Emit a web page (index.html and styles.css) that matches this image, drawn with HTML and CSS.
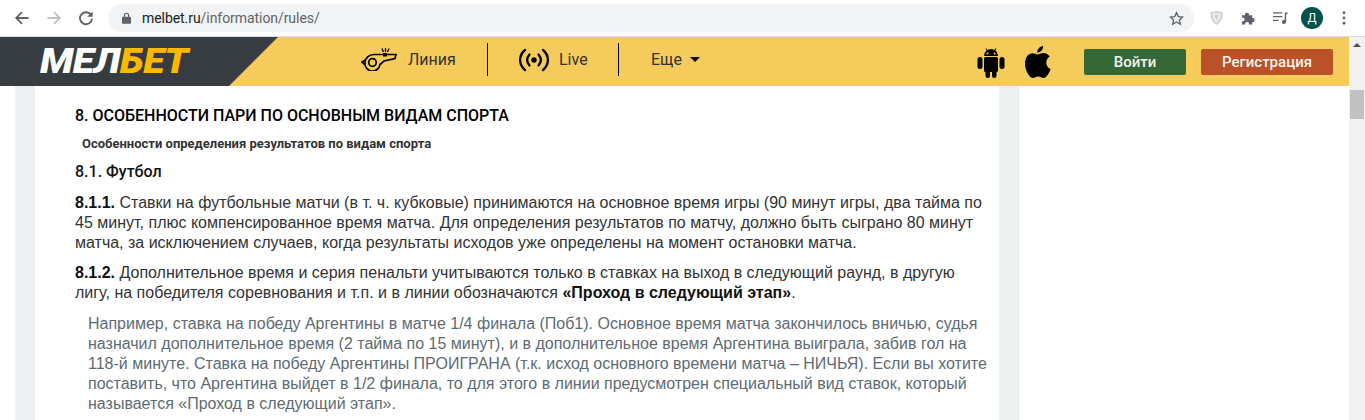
FILE: index.html
```html
<!DOCTYPE html>
<html lang="ru">
<head>
  <meta charset="UTF-8">
  <title>Правила</title>
  <link rel="stylesheet" href="styles.css">
</head>
<body>

  <!-- Browser toolbar -->
  <div class="toolbar">
    <svg class="tool-icon" viewBox="0 0 16 16"><path d="M14.5 8H2.6M8 2.2 2.2 8 8 13.8" fill="none" stroke="#5f6368" stroke-width="1.8"/></svg>
    <svg class="tool-icon" viewBox="0 0 16 16"><path d="M1.5 8h11.9M8 2.2 13.8 8 8 13.8" fill="none" stroke="#bdc1c6" stroke-width="1.8"/></svg>
    <svg class="tool-icon" viewBox="0 0 16 16"><path d="M13.2 5.2A6 6 0 1 0 14 8.6" fill="none" stroke="#5f6368" stroke-width="1.9"/><path d="M14.6 1.4v5.4H9.2z" fill="#5f6368"/></svg>
    <div class="omnibox">
      <svg class="lock" viewBox="0 0 10 13"><path d="M2 5V3.6a3 3 0 0 1 6 0V5h1a1 1 0 0 1 1 1v6a1 1 0 0 1-1 1H1a1 1 0 0 1-1-1V6a1 1 0 0 1 1-1zm1.3 0h3.4V3.6a1.7 1.7 0 0 0-3.4 0z" fill="#5f6368"/></svg>
      <span class="url"><b>melbet.ru</b>/information/rules/</span>
      <svg class="star" viewBox="0 0 16 16"><path d="m8 1.6 1.9 4.3 4.6.5-3.4 3.1 1 4.6L8 11.7l-4.1 2.4 1-4.6-3.4-3.1 4.6-.5z" fill="none" stroke="#5f6368" stroke-width="1.4"/></svg>
    </div>
    <div class="extensions">
      <svg class="ext" viewBox="0 0 16 18"><path d="M1 2.500 8 1l7 1.500c0 6-1.500 11-7 14.500C2.500 13.500 1 8.500 1 2.500z" fill="#cfd1d3"/><path d="M3.500 4h9c0 4.500-1.200 7.500-4.500 10-3.300-2.500-4.500-5.500-4.500-10z" fill="#f1f2f2"/><path d="M6 5h4c0 3-.5 5-2 6.500C6.500 10 6 8 6 5z" fill="#cfd1d3"/></svg>
      <svg class="ext" viewBox="0 0 16 16"><path d="M1 5h3.300a2.100 2.100 0 1 1 4.100 0H12v3.200a2.100 2.100 0 1 1 0 4.100V15H8.500a2.100 2.100 0 1 0-4 0H1v-3.500a2.100 2.100 0 1 0 0-4z" fill="#5f6368"/></svg>
      <svg class="ext" viewBox="0 0 16 14"><path d="M0 1.500h10M0 5.500h10M0 9.500h6" stroke="#5f6368" stroke-width="1.400"/><path d="M12.500 1h3v2h-1.500v8a2.200 2.200 0 1 1-1.500-2z" fill="#5f6368"/></svg>
      <span class="avatar">Д</span>
      <svg class="dots" viewBox="0 0 4 16"><circle cx="2" cy="2" r="1.600"/><circle cx="2" cy="8" r="1.600"/><circle cx="2" cy="14" r="1.600"/></svg>
    </div>
  </div>

  <div class="viewport">
    <div class="page">

      <!-- Site header -->
      <header class="site-header">
        <a class="logo"><span class="logo-text">МЕЛ<em>БЕТ</em></span></a>
        <nav class="menu">
          <a class="menu-item item-line">
            <svg class="whistle" viewBox="0 0 36 23"><g fill="none" stroke="#000" stroke-width="1.700"><path d="M35 6.500H13C8 6.500 4 10 4 14.500a7.500 7.500 0 0 0 15 2L23 13l11-2.500z"/><circle cx="11.500" cy="14.500" r="3.800"/><path d="M4.500 12 1 14l3 3"/></g><path d="M21 .5l1.500 3.500M24.500 0v4M28 .5 26.500 4" stroke="#000" stroke-width="1.300"/><rect x="22" y="5" width="4" height="3.500"/></svg>
            Линия
          </a>
          <a class="menu-item item-live">
            <svg class="signal" viewBox="0 0 30 24"><g fill="none" stroke="#000" stroke-width="2.300" stroke-linecap="round"><path d="M6 2C-.5 7.500-.5 16.500 6 22M24 2c6.500 5.500 6.500 14.500 0 20"/><path d="M10.500 6.500c-3 3.500-3 7.500 0 11M19.500 6.500c3 3.500 3 7.500 0 11"/></g><circle cx="15" cy="12" r="2.700"/></svg>
            Live
          </a>
          <a class="menu-item item-more">Еще <i class="caret"></i></a>
        </nav>
        <div class="apps">
          <svg class="android" viewBox="0 0 28 32"><path d="M7 10a7 7 0 0 1 14 0z"/><path d="M9 2.500 10.500 5M19 2.500 17.500 5" stroke="#000"/><rect x="7" y="11" width="14" height="15" rx="1.500"/><rect y="11" x="0.500" width="5" height="12" rx="2.500"/><rect y="11" x="22.500" width="5" height="12" rx="2.500"/><rect x="8.500" y="24" width="4.500" height="8" rx="2.200"/><rect x="15" y="24" width="4.500" height="8" rx="2.200"/><circle cx="10.500" cy="7.500" r="1" fill="#f5cb5c"/><circle cx="17.500" cy="7.500" r="1" fill="#f5cb5c"/></svg>
          <svg class="apple" viewBox="0 0 28 32" preserveAspectRatio="none"><path d="M19.500 0c.2 3.800-3 6.800-6.300 6.700C13 3.300 16 .4 19.500 0zM13.500 8.400c1.500 0 3.500-1.500 6.300-1.500 2.800 0 5.300 1.300 6.800 3.500-5.500 3.200-4.600 10.600.9 12.800-1.600 3.800-4.400 8.800-7.600 8.800-2.200 0-3.100-1.400-5.700-1.400s-3.600 1.400-5.700 1.400C4.500 32.100 0 24 0 17.500 0 11 4 7.200 8 7.200c2.400 0 4.200 1.200 5.500 1.200z"/></svg>
        </div>
        <a class="btn btn-login">Войти</a>
        <a class="btn btn-register">Регистрация</a>
      </header>

      <!-- Rules text -->
      <div class="content">
        <main class="rules">
          <h2>8. ОСОБЕННОСТИ ПАРИ ПО ОСНОВНЫМ ВИДАМ СПОРТА</h2>
          <h4>Особенности определения результатов по видам спорта</h4>
          <h3>8.1. Футбол</h3>
          <p><b>8.1.1.</b> Ставки на футбольные матчи (в т. ч. кубковые) принимаются на основное время игры (90 минут игры, два тайма по 45 минут, плюс компенсированное время матча. Для определения результатов по матчу, должно быть сыграно 80 минут матча, за исключением случаев, когда результаты исходов уже определены на момент остановки матча.</p>
          <p><b>8.1.2.</b> Дополнительное время и серия пенальти учитываются только в ставках на выход в следующий раунд, в другую лигу, на победителя соревнования и т.п. и в линии обозначаются <b>«Проход в следующий этап»</b>.</p>
          <p class="note">Например, ставка на победу Аргентины в матче 1/4 финала (Поб1). Основное время матча закончилось вничью, судья назначил дополнительное время (2 тайма по 15 минут), и в дополнительное время Аргентина выиграла, забив гол на 118-й минуте. Ставка на победу Аргентины ПРОИГРАНА (т.к. исход основного времени матча – НИЧЬЯ). Если вы хотите поставить, что Аргентина выйдет в 1/2 финала, то для этого в линии предусмотрен специальный вид ставок, который называется «Проход в следующий этап».</p>
        </main>
      </div>
    </div>

    <!-- Scrollbar -->
    <div class="scrollbar">
      <i class="arrow"></i>
      <div class="thumb"></div>
    </div>
  </div>

</body>
</html>
```

FILE: styles.css
```css
html, body {
  margin: 0;
  height: 420px;
  overflow: hidden;
  background: #fff;
  font-family: 'Liberation Sans', Arial, sans-serif;
}

/* Browser toolbar */
.toolbar {
  height: 37px;
  box-sizing: border-box;
  padding: 4px 0 0 14px;
  display: flex;
  align-items: flex-start;
  border-bottom: 1px solid #dadce0;
  background: #fff;
}

.tool-icon {
  width: 16px;
  height: 16px;
  margin: 6px 16px 0 0;
}

.omnibox {
  width: 1086px;
  height: 28px;
  border-radius: 14px;
  background: #f1f3f4;
  display: flex;
  align-items: center;
  padding: 0 16px 0 14px;
  box-sizing: border-box;
  margin-left: -2px;
}

.lock {
  width: 9px;
  height: 12px;
  margin: 0 11px 0 0;
}

.url {
  font-family: Roboto, sans-serif;
  font-size: 14px;
  letter-spacing: -0.06px;
  color: #5f6368;
  flex: 1;
}

.url b {
  font-weight: 400;
  color: #202124;
}

.star {
  width: 15px;
  height: 15px;
  margin-right: -6px;
}

.extensions {
  display: flex;
  align-items: center;
  height: 28px;
  padding-left: 15px;
}

.ext {
  width: 15px;
  height: 16px;
  margin-right: 17px;
}

.avatar {
  width: 22px;
  height: 22px;
  border-radius: 50%;
  background: #00524a;
  color: #fff;
  font: 12px/22px Roboto, sans-serif;
  text-align: center;
  margin-left: -4px;
}

.dots {
  width: 4px;
  height: 14px;
  margin-left: 19px;
  fill: #5f6368;
}

.viewport {
  display: flex;
  height: 383px;
}

.page {
  flex: 1;
  min-width: 0;
}

/* Site header */
.site-header {
  height: 49px;
  background: #f5cb5c;
  display: flex;
  align-items: center;
}

.logo {
  width: 278px;
  height: 49px;
  box-sizing: border-box;
  padding-left: 40px;
  background: #373c40;
  clip-path: polygon(0 0, 100% 0, 229px 100%, 0 100%);
  font: italic 900 35px/49px Roboto, sans-serif;
  color: #fff;
  letter-spacing: -0.5px;
}

.logo-text {
  display: inline-block;
  transform: scaleX(1.12);
  transform-origin: left center;
}

.logo em {
  color: #ffb800;
}

.menu {
  display: flex;
  align-items: center;
  margin: 0 0 4px 83px;
  font-family: Roboto, sans-serif;
  font-size: 16px;
  color: #333;
}

.menu-item {
  height: 33px;
  display: flex;
  align-items: center;
  box-sizing: border-box;
}

.item-line {
  width: 127px;
  border-right: 1px solid #000;
}

.item-live {
  width: 131px;
  padding-left: 31px;
  border-right: 1px solid #000;
}

.item-more {
  padding-left: 32px;
  gap: 8px;
  width: 100px;
}

.whistle {
  width: 36px;
  height: 23px;
  margin-right: 11px;
}

.signal {
  width: 30px;
  height: 24px;
  margin-right: 10px;
}

.caret {
  border: 5px solid transparent;
  border-top-color: #000;
  border-bottom: 0;
}

.apps {
  display: flex;
  align-items: center;
  gap: 20px;
  margin-left: 258px;
}

.android {
  width: 28px;
  height: 32px;
}

.apple {
  width: 26px;
  height: 32px;
}

.btn {
  height: 26px;
  border-radius: 2px;
  color: #f4f4f0;
  font: 500 15px/26px Roboto, sans-serif;
  text-align: center;
}

.btn-login {
  width: 102px;
  margin-left: 33px;
  background: #366835;
}

.btn-register {
  width: 132px;
  margin-left: 15px;
  background: #bb5127;
}

/* Rules text */
.content {
  height: 334px;
  box-sizing: border-box;
  margin: 0 0 0 15px;
  width: 1004px;
  padding: 0 20px;
  background: #ecf0f1;
}

.rules {
  height: 100%;
  background: #fff;
  padding: 20px 10px 0 40px;
  box-sizing: border-box;
  color: #333;
  font-size: 16px;
  line-height: 20px;
}

.rules h2 {
  margin: 0 0 10px;
  font: 500 16px/20px Roboto, sans-serif;
  color: #000;
}

.rules h4 {
  margin: 0 0 10px 7px;
  font: 700 13px/16px Roboto, sans-serif;
  color: #333;
}

.rules h3 {
  margin: 0 0 11px;
  font: 500 16px/20px Roboto, sans-serif;
  color: #111;
}

.rules p {
  margin: 0 0 10px;
}

.rules b {
  color: #111;
}

.rules .note {
  margin-top: 11px;
  padding: 0 0 0 13px;
  color: #5e6b73;
}

/* Scrollbar */
.scrollbar {
  width: 16px;
  background: #f1f1f1;
}

.arrow {
  display: block;
  width: 0;
  margin: 6px auto 0;
  border: 4px solid transparent;
  border-bottom-color: #505050;
  border-top: 0;
}

.thumb {
  height: 29px;
  margin: 43px 0 0 1px;
  width: 14px;
  background: #c1c1c1;
}
```
